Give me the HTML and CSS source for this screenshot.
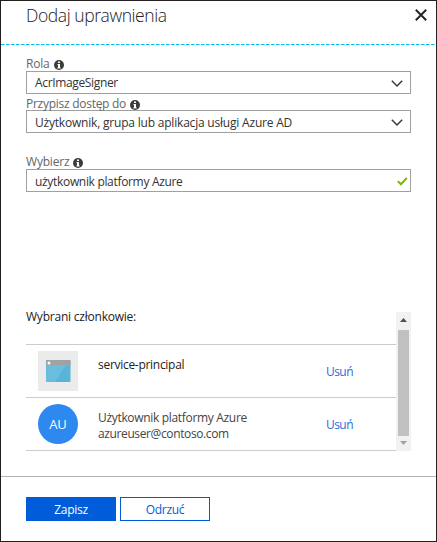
FILE: index.html
```html
<!DOCTYPE html>
<html lang="pl">
<head>
<meta charset="utf-8">
<title>Dodaj uprawnienia</title>
<link rel="stylesheet" href="styles.css">
</head>
<body>
<svg class="defs" width="0" height="0">
  <symbol id="info" viewBox="0 0 10 10">
    <circle cx="5" cy="5" r="5" fill="#3c3c3c"/>
    <path d="M4 1.500h2v1.500H4zM3.500 4H6v3.500h.7v1H3.300v-1H4V5h-.5z" fill="#fff"/>
  </symbol>
  <symbol id="chevron" viewBox="0 0 12 7">
    <path d="M.8.8 6 6 11.2.8" fill="none" stroke="#333" stroke-width="1.4"/>
  </symbol>
</svg>
<main class="panel">
  <header class="header">
    <h1 class="title">Dodaj uprawnienia</h1>
    <svg class="close" width="12" height="12" viewBox="0 0 12 12"><path d="M.8.8l10.400 10.400M11.200.8.8 11.200" stroke="#262626" stroke-width="2"/></svg>
  </header>
  <svg class="dash" width="435" height="1"><path d="M0 .5H435" stroke="#00bcf2" stroke-dasharray="3.5 1.5"/></svg>
  <section class="form">
    <div class="label label-role"><span class="t-role">Rola</span><svg class="info" width="10" height="10"><use href="#info"/></svg></div>
    <div class="field"><span class="t-signer">AcrImageSigner</span><svg class="chev" width="12" height="7"><use href="#chevron"/></svg></div>
    <div class="label label-assign"><span class="t-assign">Przypisz dostęp do</span><svg class="info" width="10" height="10"><use href="#info"/></svg></div>
    <div class="field"><span class="t-group">Użytkownik, grupa lub aplikacja usługi Azure AD</span><svg class="chev" width="12" height="7"><use href="#chevron"/></svg></div>
    <div class="label label-select"><span class="t-select">Wybierz</span><svg class="info" width="10" height="10"><use href="#info"/></svg></div>
    <div class="field"><span class="t-query">użytkownik platformy Azure</span><svg class="check" width="11" height="9" viewBox="0 0 11 9"><path d="M.8 4.2 4 7.2 9.8.9" fill="none" stroke="#7fba00" stroke-width="2.1"/></svg></div>
  </section>
  <section class="members">
    <div class="list">
      <h2 class="heading">Wybrani członkowie:</h2>
      <div class="row">
        <svg class="avatar" width="40" height="40" viewBox="0 0 40 40">
          <rect width="40" height="40" fill="#ebebeb"/>
          <rect x="8" y="9" width="24.5" height="22" rx="1" fill="#59b4d9"/>
          <path d="M8 14h20L17 31H9q-1 0-1-1z" fill="#6bbddd"/>
          <path d="M8 14v-4q0-1 1-1h22.500q1 0 1 1v4z" fill="#a0a1a2"/>
          <circle cx="11" cy="12" r="1.500" fill="#fff"/>
        </svg>
        <div class="who who-app"><span class="t-sp">service-principal</span></div>
        <a class="remove">Usuń</a>
      </div>
      <div class="row">
        <div class="avatar circle">AU</div>
        <div class="who"><span class="t-user">Użytkownik platformy Azure</span><span class="t-mail">azureuser@contoso.com</span></div>
        <a class="remove">Usuń</a>
      </div>
    </div>
    <div class="scrollbar">
      <svg width="7" height="4"><path d="M0 4h7L3.500 0z" fill="#505050"/></svg>
      <div class="thumb"></div>
      <svg width="7" height="4"><path d="M0 0h7L3.500 4z" fill="#a3a3a3"/></svg>
    </div>
  </section>
  <footer class="footer">
    <button class="btn primary">Zapisz</button>
    <button class="btn">Odrzuć</button>
  </footer>
</main>
</body>
</html>
```
FILE: styles.css
```css
* { box-sizing: border-box; }
body { margin: 0; font-family: "Open Sans", "Noto Sans", sans-serif; font-size: 12px; color: #333; background: #fff; }
span { white-space: nowrap; }
svg { display: block; flex: none; }
.defs { position: absolute; }
.panel { width: 437px; height: 542px; border: 1px solid #231f20; display: flex; flex-direction: column; }
.header { height: 43px; padding: 0 9px 0 25px; display: flex; justify-content: space-between; }
.title { margin: 1px 0 0; font-size: 17.5px; line-height: 26px; font-weight: 300; letter-spacing: -0.42px; color: #222; }
.close { margin-top: 8px; }
.form { padding: 0 25px; }
.label { display: flex; align-items: center; gap: 5px; color: #666; line-height: 14px; height: 16px; padding-top: 2px; }
.info { margin: 2px 0 0 -1px; }
.label-role { margin-top: 10px; }
.label-assign { padding-top: 3px; }
.label-select { margin-top: 20px; }
.field { width: 385px; height: 23px; border: 1px solid #a0a0a0; padding: 1px 8px 0; display: flex; align-items: center; justify-content: space-between; line-height: 20px; color: #333; }
.chev { margin-right: -1px; }
.check { margin-right: -6px; }
.t-role { letter-spacing: -0.2px; }
.t-signer { letter-spacing: -0.35px; }
.t-assign { letter-spacing: -0.27px; }
.t-group { letter-spacing: -0.2px; padding-top: 1px; }
.t-select { letter-spacing: -0.2px; }
.t-query, .t-user { letter-spacing: -0.32px; }
.t-query { padding-top: 1px; }
.t-sp { letter-spacing: -0.29px; }
.t-mail { letter-spacing: -0.38px; }
.members { display: flex; margin: 120px 0 0 25px; height: 139px; width: 385px; }
.list { flex: 1; }
.heading { margin: 0; height: 32px; font-size: 12px; line-height: 10px; font-weight: 400; letter-spacing: -0.22px; color: #222; }
.row { height: 53px; border-top: 1px solid #ccc; padding: 6px 0 0 12px; display: flex; }
.row:last-child { height: 54px; border-bottom: 1px solid #ccc; }
.avatar { width: 40px; height: 40px; }
.circle { border-radius: 50%; background: #2d89ef; color: #fff; text-align: center; font-size: 13px; line-height: 40px; }
.who { width: 248px; padding: 6px 0 0 20px; display: flex; flex-direction: column; line-height: 16px; color: #444; }
.who-app { color: #222; }
.remove { line-height: 16px; margin-top: 13px; letter-spacing: -0.55px; color: #2a6be0; }
.scrollbar { width: 15px; background: #f1f1f1; padding-top: 6px; display: flex; flex-direction: column; align-items: center; }
.thumb { width: 11px; height: 106px; margin: 8px 0 5px; background: #c1c1c1; }
.footer { margin-top: 25px; border-top: 1px solid #b4b4b4; padding: 20px 25px; display: flex; gap: 4px; }
.btn { width: 90px; height: 24px; padding: 1px 0 0; border: 1px solid #015cda; background: #fff; color: #015cda; font: 12px/20px "Open Sans", sans-serif; letter-spacing: -0.3px; }
.primary { background: #015cda; color: #fff; }
```
